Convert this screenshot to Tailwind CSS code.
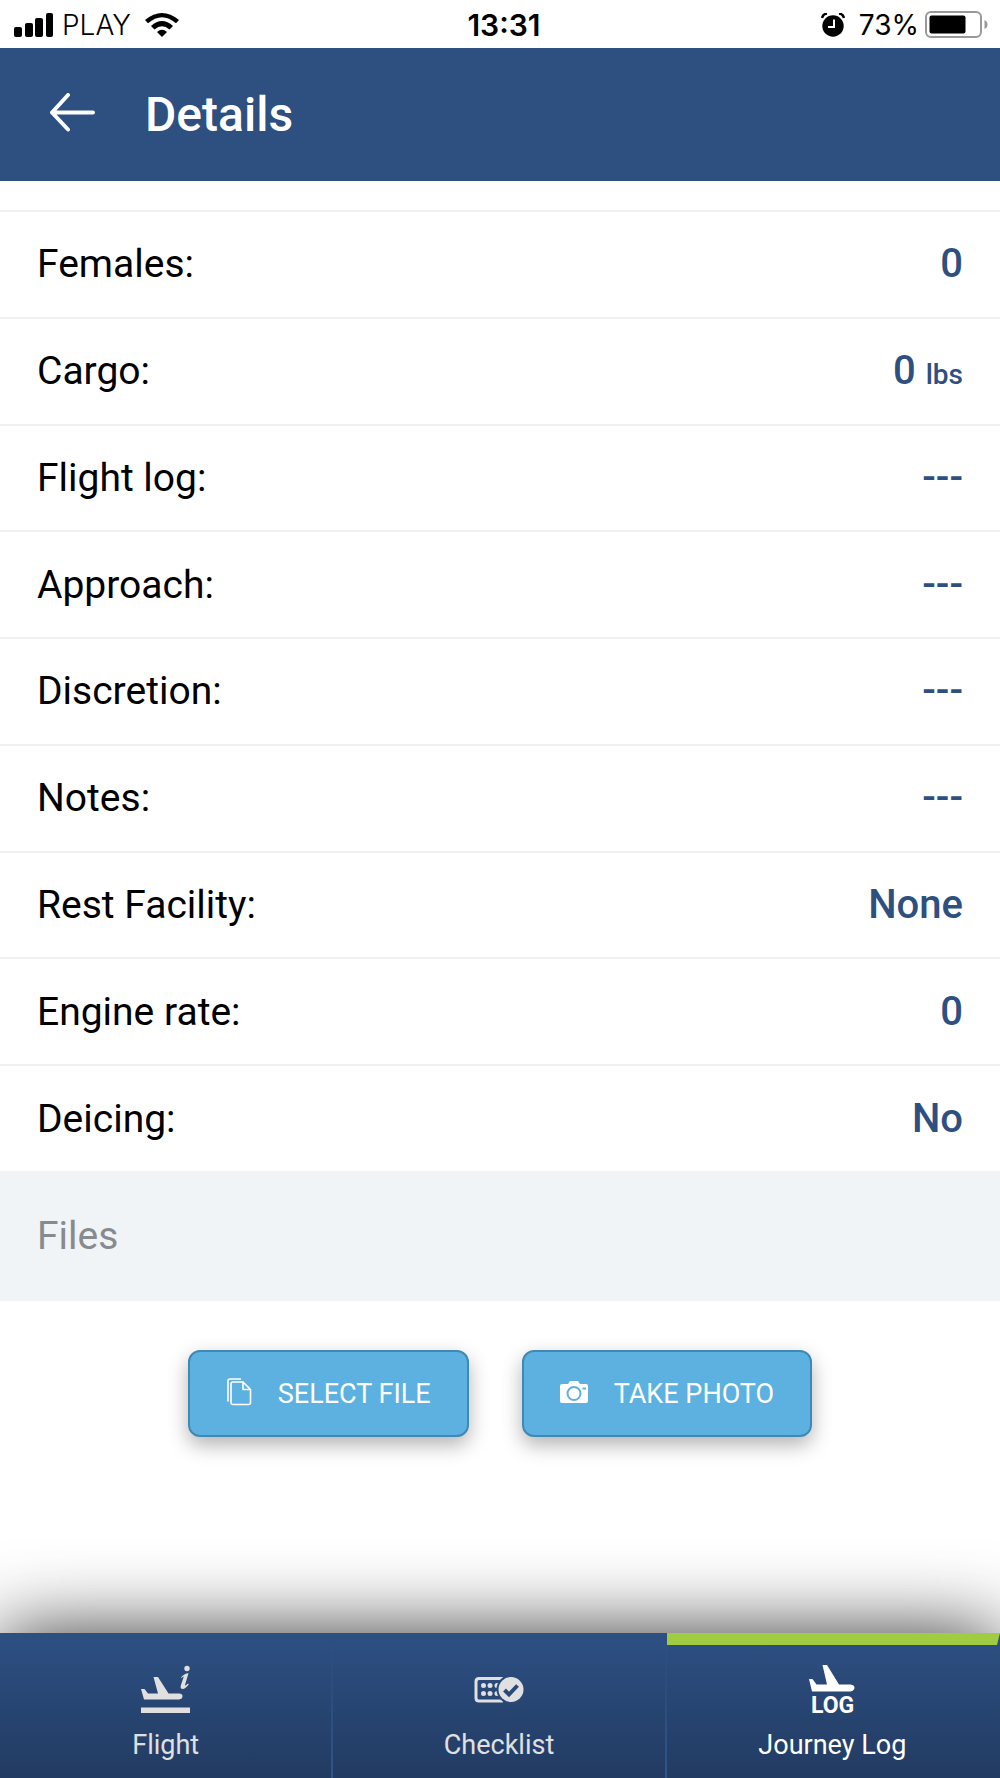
<!DOCTYPE html>
<html lang="en">
<head>
<meta charset="utf-8">
<meta name="viewport" content="width=device-width, initial-scale=1">
<title>Details</title>
<script src="https://cdn.jsdelivr.net/npm/@tailwindcss/browser@4"></script>
</head>
<body class="flex min-h-screen flex-col overflow-x-hidden bg-white font-['Roboto',sans-serif] text-black">

<!-- Status bar -->
<div class="grid h-12 grid-cols-3 items-center px-[14px] pt-[2px] font-['Inter',sans-serif] text-[28px] leading-8">
  <div class="flex items-center">
    <svg class="h-6 w-10" viewBox="0 0 40 24" aria-hidden="true">
      <rect x="0" y="14" width="8" height="10" rx="2"/><rect x="11" y="10" width="8" height="14" rx="2"/><rect x="21" y="5" width="8" height="19" rx="2"/><rect x="32" y="0" width="7" height="24" rx="2"/>
    </svg>
    <span class="ml-2 font-light">PLAY</span>
    <svg class="ml-[14px] h-6 w-[34px]" viewBox="0 0 34 24" aria-hidden="true">
      <path d="M0 7Q17-7 34 7L31 10.300Q17-2 3 10.300Z"/><path d="M6 13Q17 3 28 13L24.500 16.500Q17 10 9.500 16.500Z"/><path d="M12 19Q17 14.500 22 19L17 24Z"/>
    </svg>
  </div>
  <time class="pl-2 text-center text-[30px] font-semibold">13:31</time>
  <div class="flex items-center justify-end">
    <svg class="h-6 w-6" viewBox="0 0 24 24" aria-hidden="true">
      <circle cx="12" cy="13" r="10.700"/><path d="M1 5Q2 1 6 .500M23 5Q22 1 18 .500" fill="none" stroke="#000" stroke-width="2.500"/><path d="M13 6.500V14H7" fill="none" stroke="#fff" stroke-width="2"/>
    </svg>
    <span class="ml-[14px]">73%</span>
    <svg class="-mr-[2px] ml-[6px] h-7 w-[63px]" viewBox="0 0 63 28" aria-hidden="true">
      <rect x="1" y="1" width="55" height="25" rx="5" fill="none" stroke="#999" stroke-width="2"/><rect x="4.500" y="4.500" width="36" height="18" rx="2"/><path d="M59.500 9Q62.500 10 62.500 13.500T59.500 18Z" fill="#999"/>
    </svg>
  </div>
</div>

<header class="flex h-[133px] items-center bg-[#2d5081] px-[50px] text-white">
  <a href="#" aria-label="Back" class="block pb-1">
    <svg class="h-10 w-[45px]" viewBox="0 0 45 40" fill="none" stroke="#fff" stroke-width="4" stroke-linecap="round" stroke-linejoin="round" aria-hidden="true"><path d="M43 19.500H2M18 2L2 19.500L18 36.500"/></svg>
  </a>
  <h1 class="ml-[50px] text-5xl font-medium">Details</h1>
</header>

<main class="pt-[29px] pb-20">
  <dl class="grid h-[961px] auto-rows-fr text-[39px] leading-[48px]">
    <div class="flex items-center justify-between border-t-2 border-[#f0f0f0] px-[37px]"><dt>Females:</dt><dd class="text-[40px] font-medium text-[#2d5081]">0</dd></div>
    <div class="flex items-center justify-between border-t-2 border-[#f0f0f0] px-[37px]"><dt>Cargo:</dt><dd class="flex items-baseline gap-[10px] text-[40px] font-medium text-[#2d5081]">0 <span class="text-[28px] leading-8">lbs</span></dd></div>
    <div class="flex items-center justify-between border-t-2 border-[#f0f0f0] px-[37px]"><dt>Flight log:</dt><dd class="text-[40px] font-medium text-[#2d5081]">---</dd></div>
    <div class="flex items-center justify-between border-t-2 border-[#f0f0f0] px-[37px]"><dt>Approach:</dt><dd class="text-[40px] font-medium text-[#2d5081]">---</dd></div>
    <div class="flex items-center justify-between border-t-2 border-[#f0f0f0] px-[37px]"><dt>Discretion:</dt><dd class="text-[40px] font-medium text-[#2d5081]">---</dd></div>
    <div class="flex items-center justify-between border-t-2 border-[#f0f0f0] px-[37px]"><dt>Notes:</dt><dd class="text-[40px] font-medium text-[#2d5081]">---</dd></div>
    <div class="flex items-center justify-between border-t-2 border-[#f0f0f0] px-[37px]"><dt>Rest Facility:</dt><dd class="text-[40px] font-medium text-[#2d5081]">None</dd></div>
    <div class="flex items-center justify-between border-t-2 border-[#f0f0f0] px-[37px]"><dt>Engine rate:</dt><dd class="text-[40px] font-medium text-[#2d5081]">0</dd></div>
    <div class="flex items-center justify-between border-t-2 border-[#f0f0f0] px-[37px]"><dt>Deicing:</dt><dd class="text-[40px] font-medium text-[#2d5081]">No</dd></div>
  </dl>

  <h2 class="flex h-[130px] items-center bg-[#f0f4f7] px-[37px] text-[39px] leading-[48px] text-[#888b8e]">Files</h2>

  <div class="mt-[49px] flex justify-center gap-[53px] text-[27px] leading-8 text-white">
    <button type="button" class="flex h-[87px] items-center rounded-xl border-2 border-[#3f89b5] bg-[#5cb1e0] px-9 shadow-[0_8px_20px_rgba(0,0,0,0.3)]">
      <svg class="mr-[26px] mb-1 h-7 w-[26px]" viewBox="0 0 26 28" fill="none" stroke="#fff" stroke-width="1.600" stroke-linejoin="round" aria-hidden="true"><path d="M2 23.500V3Q2 1 4 1H15M7 4H17L24.500 11.500V24.500Q24.500 26.500 22.500 26.500H7Q5 26.500 5 24.500V6Q5 4 7 4ZM17 4V11.500H24.500"/></svg>
      SELECT FILE
    </button>
    <button type="button" class="flex h-[87px] items-center rounded-xl border-2 border-[#3f89b5] bg-[#5cb1e0] px-9 shadow-[0_8px_20px_rgba(0,0,0,0.3)]">
      <svg class="mr-[26px] mb-1 h-[22px] w-7" viewBox="0 0 28 22" fill="#fff" aria-hidden="true"><path d="M2 3H8L10 0H18L20 3H26Q28 3 28 5V20Q28 22 26 22H2Q0 22 0 20V5Q0 3 2 3Z"/><circle cx="14" cy="12.500" r="6.500" fill="none" stroke="#5cb1e0" stroke-width="2"/><path d="M22.500 7.500H26" stroke="#5cb1e0" stroke-width="2"/></svg>
      TAKE PHOTO
    </button>
  </div>
</main>

<nav class="sticky bottom-0 mt-auto grid h-[145px] grid-cols-3 bg-linear-to-b from-[#2d5083] to-[#223b62] text-[27px] leading-8 text-[#e0e0e0] shadow-[0_0_80px_rgba(0,0,0,0.8)]">
  <a href="#" class="relative flex flex-col items-center pt-8 pr-[2px]">
    <svg class="h-14 w-[50px]" viewBox="0 0 50 56" fill="currentColor" aria-hidden="true">
      <path d="M0 24H3.500L7 28.500H17L12.500 12H17L27.500 28.500H38Q41.500 28.500 41.500 31.200T38 34.500H3Z"/>
      <path d="M0 42.500H49V48H0Z"/>
      <circle cx="46" cy="3.500" r="2.700"/>
      <path d="M40 12.500Q43 8.500 47.500 8.300L44 20Q43.800 21.500 47 18.500L47.800 19.200Q44.500 24 41.500 24Q39 23.800 39.800 20.500L42.800 11.500Q42 11.200 40.500 13Z"/>
    </svg>
    <span class="mt-2">Flight</span>
    <span class="absolute top-0 right-0 h-full w-[2px] bg-linear-to-b from-transparent to-[#31568c]"></span>
  </a>
  <a href="#" class="relative flex flex-col items-center pt-8 pr-[2px]">
    <svg class="h-14 w-[50px]" viewBox="0 0 50 56" fill="currentColor" aria-hidden="true">
      <path d="M29 13.500H5Q2 13.500 2 16.500V33Q2 36 5 36H29" fill="none" stroke="currentColor" stroke-width="3"/>
      <circle cx="9.500" cy="20.500" r="2.500"/><circle cx="16" cy="20.500" r="2.500"/><circle cx="23" cy="20.500" r="2.500"/><circle cx="9.500" cy="28.500" r="2.500"/><circle cx="16" cy="28.500" r="2.500"/><circle cx="23" cy="28.500" r="2.500"/>
      <circle cx="37" cy="24.500" r="14.500" fill="#294a78"/><circle cx="37" cy="24.500" r="12.500"/><path d="M30.500 25L35 29.500L43.500 20.500" fill="none" stroke="#294a78" stroke-width="4"/>
    </svg>
    <span class="mt-2">Checklist</span>
    <span class="absolute top-0 right-0 h-full w-[2px] bg-linear-to-b from-transparent to-[#31568c]"></span>
  </a>
  <a href="#" aria-current="page" class="relative flex flex-col items-center pt-8 pr-[2px] text-white">
    <span class="absolute inset-x-0 top-0 h-3 bg-[#9fcc41] [clip-path:polygon(0_0,100%_0,calc(100%-3px)_100%,0_100%)]"></span>
    <svg class="h-14 w-[50px]" viewBox="0 0 50 56" fill="currentColor" aria-hidden="true">
      <path d="M2 14H5.500L9.500 19.500H20L15.500 0H20L32 19.500H43.500Q47.500 20 47.500 22.800T43.500 26.500H5Z"/>
      <text x="4" y="48" font-family="Roboto, sans-serif" font-weight="700" font-size="23">LOG</text>
    </svg>
    <span class="mt-2">Journey Log</span>
  </a>
</nav>
</body>
</html>
